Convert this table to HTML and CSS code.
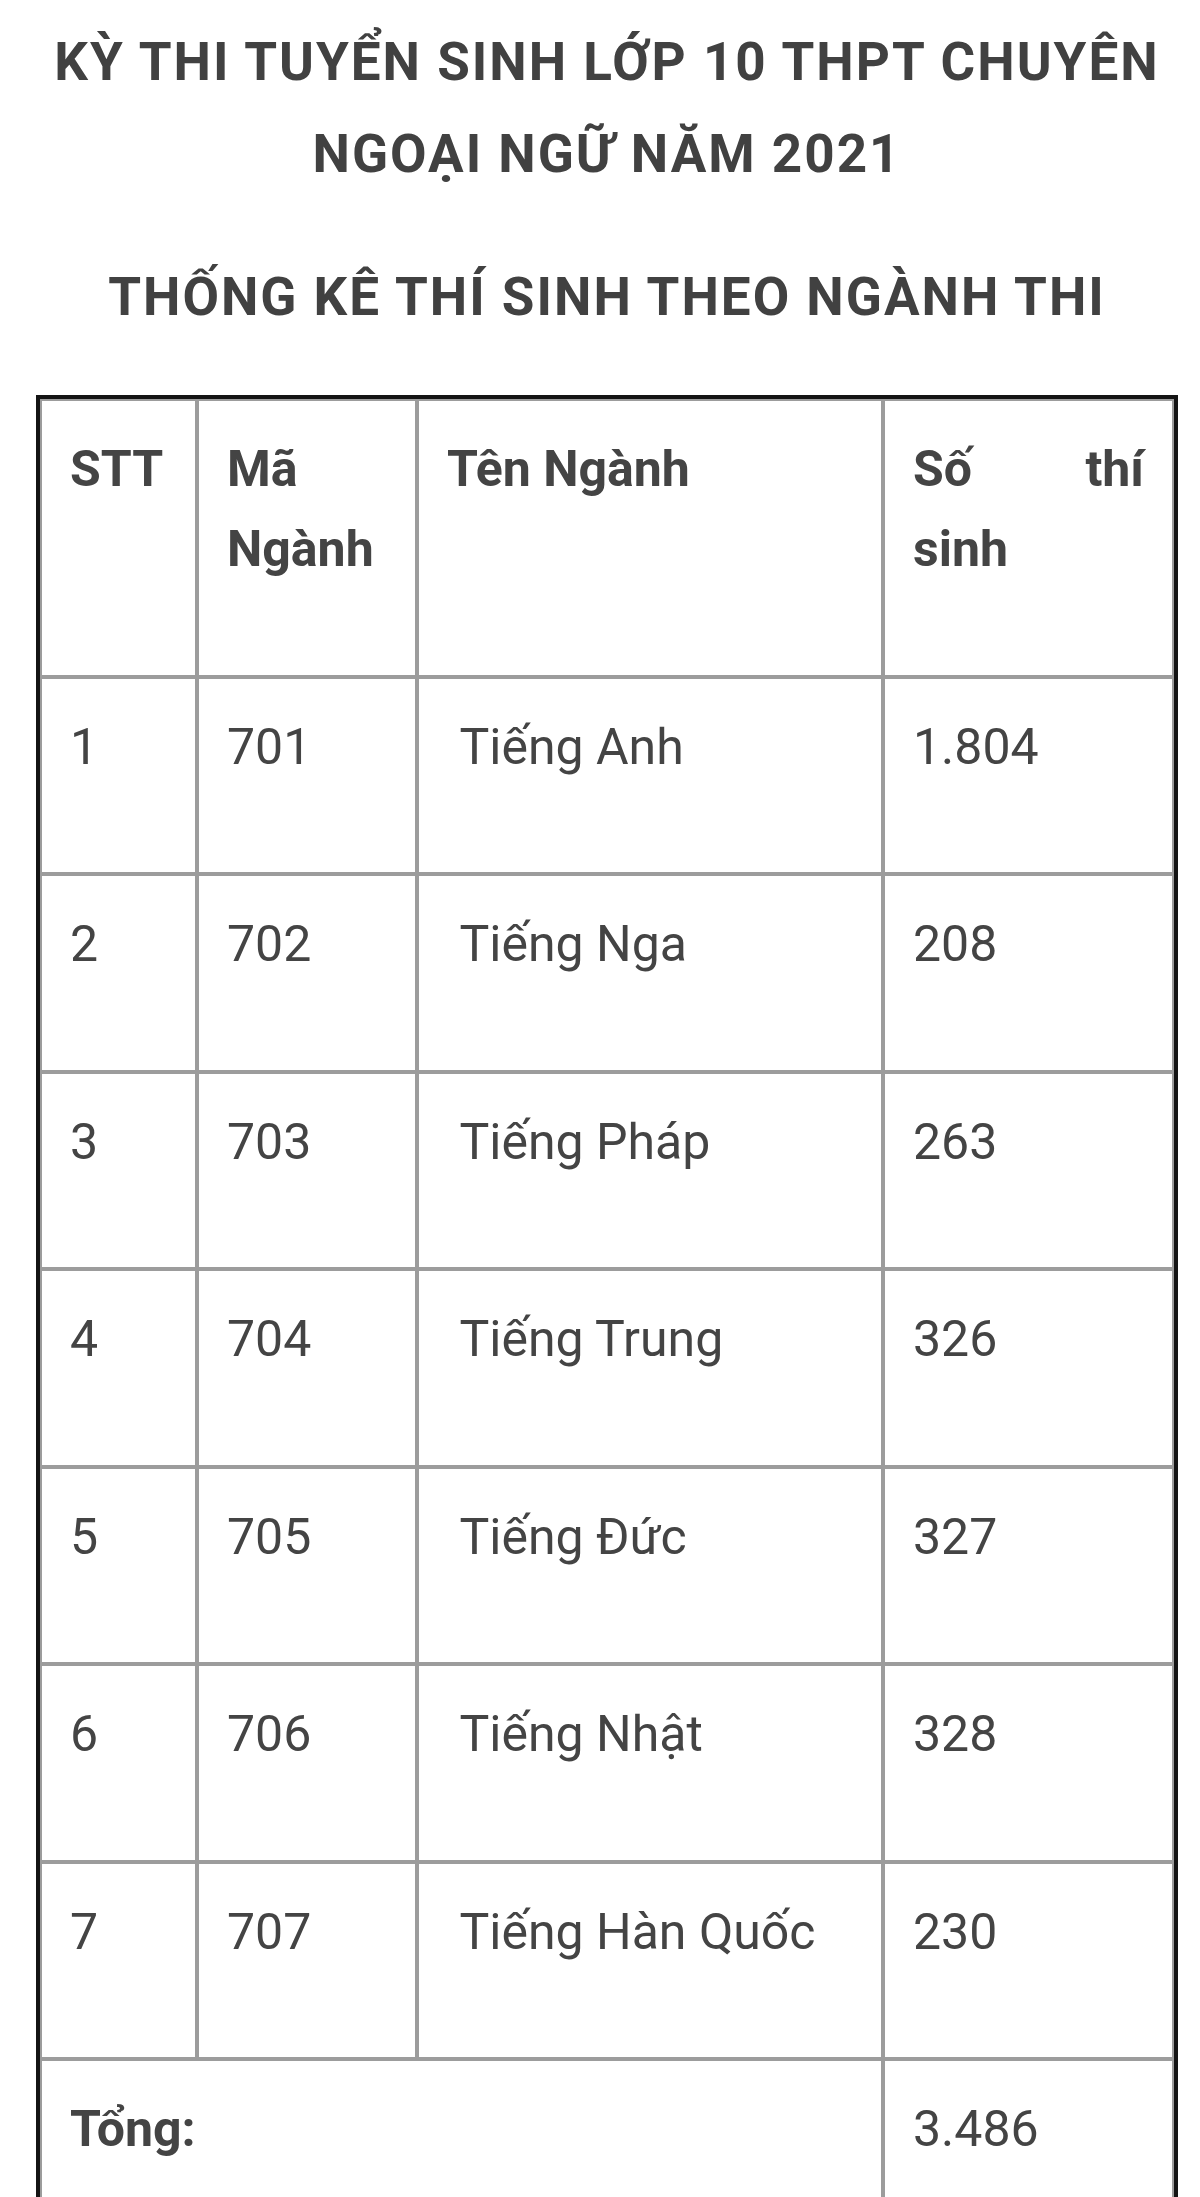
FILE: index.html
```html
<!DOCTYPE html>
<html lang="vi">
<head>
<meta charset="utf-8">
<title>Thống kê thí sinh theo ngành thi</title>
<link rel="stylesheet" href="styles.css">
</head>
<body>
<main class="page">
  <h1 class="title">KỲ THI TUYỂN SINH LỚP 10 THPT CHUYÊN NGOẠI NGỮ NĂM 2021</h1>
  <h2 class="subtitle">THỐNG KÊ THÍ SINH THEO NGÀNH THI</h2>
  <table class="stats">
    <colgroup>
      <col class="c-stt">
      <col class="c-ma">
      <col class="c-ten">
      <col class="c-so">
    </colgroup>
    <thead>
      <tr>
        <th>STT</th>
        <th>Mã Ngành</th>
        <th>Tên Ngành</th>
        <th><span class="just">Số thí</span><span class="line">sinh</span></th>
      </tr>
    </thead>
    <tbody>
      <tr><td>1</td><td>701</td><td>&nbsp;Tiếng Anh</td><td>1.804</td></tr>
      <tr><td>2</td><td>702</td><td>&nbsp;Tiếng Nga</td><td>208</td></tr>
      <tr><td>3</td><td>703</td><td>&nbsp;Tiếng Pháp</td><td>263</td></tr>
      <tr><td>4</td><td>704</td><td>&nbsp;Tiếng Trung</td><td>326</td></tr>
      <tr><td>5</td><td>705</td><td>&nbsp;Tiếng Đức</td><td>327</td></tr>
      <tr><td>6</td><td>706</td><td>&nbsp;Tiếng Nhật</td><td>328</td></tr>
      <tr><td>7</td><td>707</td><td>&nbsp;Tiếng Hàn Quốc</td><td>230</td></tr>
      <tr><td colspan="3" class="total-label">Tổng:</td><td>3.486</td></tr>
    </tbody>
  </table>
</main>
</body>
</html>
```

FILE: styles.css
```css
html, body {
  margin: 0;
  padding: 0;
  background: #ffffff;
}

body {
  font-family: Roboto, "Noto Sans", "Liberation Sans", sans-serif;
  color: #444444;
}

.page {
  width: 1142px;
  padding: 16px 0 0 36px;
}

.title,
.subtitle {
  margin: 0;
  font-size: 53px;
  line-height: 92px;
  font-weight: 700;
  letter-spacing: 2px;
  text-align: center;
  color: #414141;
}

.subtitle {
  margin: 51px 0 52px;
}

.stats {
  width: 1142px;
  table-layout: fixed;
  border-collapse: separate;
  border-spacing: 0;
  border: 4px solid #141414;
}

.c-stt { width: 157px; }
.c-ma { width: 220px; }
.c-ten { width: 466px; }
.c-so { width: 291px; }

.stats th,
.stats td {
  box-sizing: border-box;
  border: 2px solid #9c9c9c;
  padding: 28px 28px 85.5px;
  font-size: 50px;
  line-height: 80px;
  text-align: left;
  vertical-align: top;
  color: #444444;
}

.stats th {
  font-weight: 700;
  text-align: justify;
}

.stats td {
  font-weight: 400;
}

.stats td.total-label {
  font-weight: 700;
}

.just {
  display: block;
  text-align: justify;
  text-align-last: justify;
}

.line {
  display: block;
}
```
